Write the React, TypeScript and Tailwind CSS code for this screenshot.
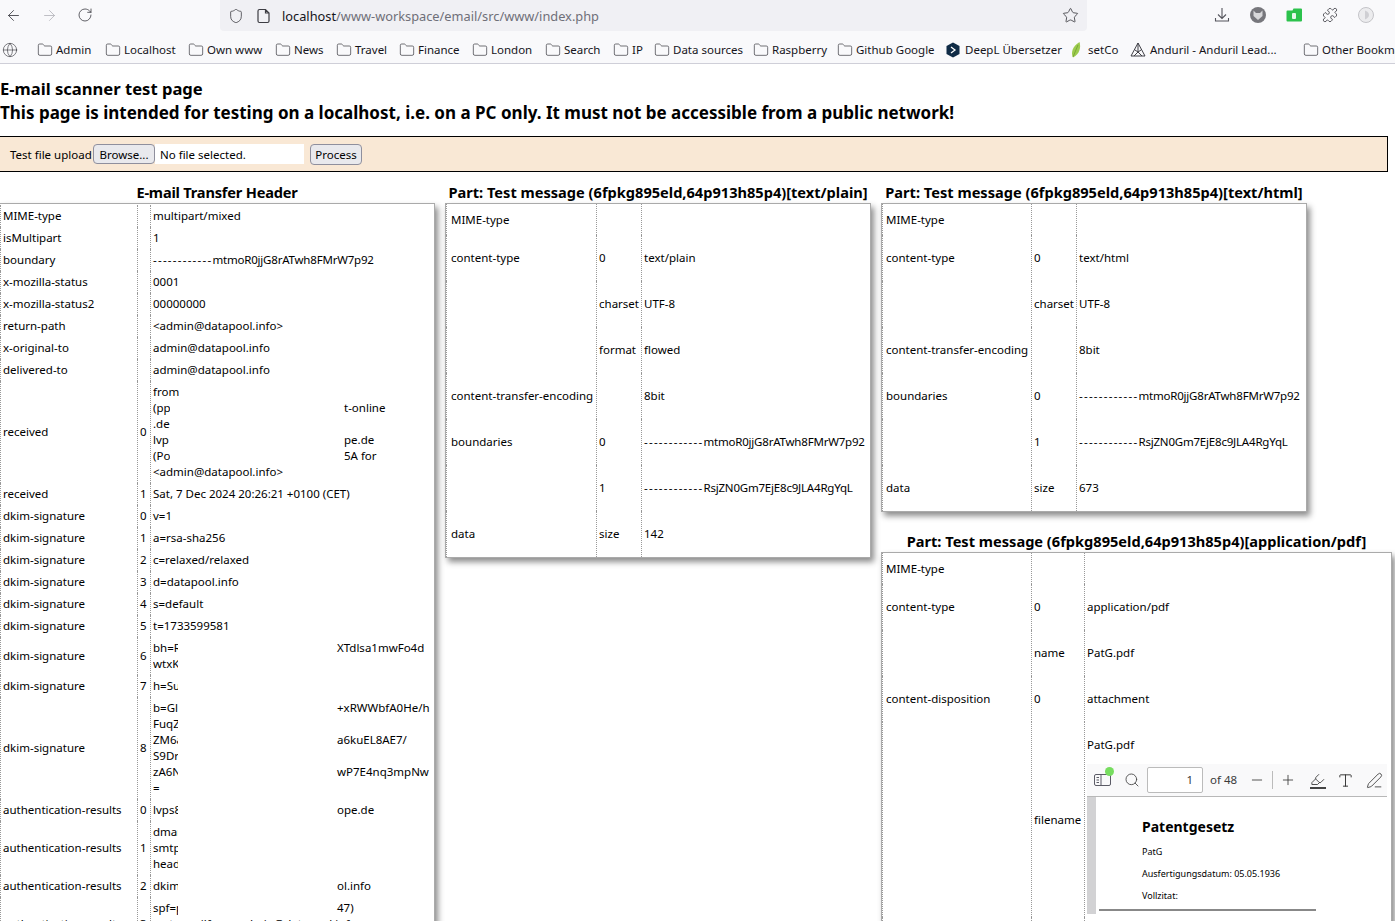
import React from "react";
import { ArrowLeft, ArrowRight, RotateCw, Shield, Star, Puzzle, Globe, Folder, Search, Minus, Plus, Type, PenLine, Highlighter } from "lucide-react";

type Row = { k?: string; i?: string; v?: React.ReactNode; h?: string };

function Frag({ l, r, clip = "w-[25px]", off = "ml-[159px]" }: { l: string; r?: string; clip?: string; off?: string }) {
  return (
    <div className="flex h-[16px] whitespace-nowrap">
      <span className={"overflow-hidden shrink-0 " + clip}>{l}</span>
      {r && <span className={off}>{r}</span>}
    </div>
  );
}

function Bound({ s }: { s: string }) {
  return (
    <>
      <span className="tracking-[1.25px]">------------</span>
      <span className="tracking-[-0.2px]">{s}</span>
    </>
  );
}

const cell = "border-r border-dotted border-[#999] align-middle";

const headerRows: Row[] = [
  { k: "MIME-type", v: "multipart/mixed" },
  { k: "isMultipart", v: "1" },
  { k: "boundary", v: <Bound s="mtmoR0jjG8rATwh8FMrW7p92" /> },
  { k: "x-mozilla-status", v: "0001" },
  { k: "x-mozilla-status2", v: "00000000" },
  { k: "return-path", v: "<admin@datapool.info>" },
  { k: "x-original-to", v: "admin@datapool.info" },
  { k: "delivered-to", v: "admin@datapool.info" },
  {
    k: "received",
    i: "0",
    v: (
      <>
        <Frag l="from" clip="w-[28px]" />
        <Frag l="(pp" clip="w-[17px]" r="t-online" off="ml-[174px]" />
        <Frag l=".de" clip="w-[17px]" />
        <Frag l="lvp" clip="w-[17px]" r="pe.de" off="ml-[174px]" />
        <Frag l="(Po" clip="w-[17px]" r="5A for" off="ml-[174px]" />
        <div className="h-[16px]">{"<admin@datapool.info>"}</div>
      </>
    ),
  },
  { k: "received", i: "1", v: "Sat, 7 Dec 2024 20:26:21 +0100 (CET)" },
  { k: "dkim-signature", i: "0", v: "v=1" },
  { k: "dkim-signature", i: "1", v: "a=rsa-sha256" },
  { k: "dkim-signature", i: "2", v: "c=relaxed/relaxed" },
  { k: "dkim-signature", i: "3", v: "d=datapool.info" },
  { k: "dkim-signature", i: "4", v: "s=default" },
  { k: "dkim-signature", i: "5", v: "t=1733599581" },
  {
    k: "dkim-signature",
    i: "6",
    v: (
      <>
        <Frag l="bh=Rk" r="XTdlsa1mwFo4d" />
        <Frag l="wtxKa" />
      </>
    ),
  },
  { k: "dkim-signature", i: "7", v: <Frag l="h=Subject" /> },
  {
    k: "dkim-signature",
    i: "8",
    v: (
      <>
        <Frag l="b=Gl0aa" r="+xRWWbfA0He/h" />
        <Frag l="FuqZaa" />
        <Frag l="ZM6aaa" r="a6kuEL8AE7/" />
        <Frag l="S9Draa" />
        <Frag l="zA6Naa" r="wP7E4nq3mpNw" />
        <div className="h-[16px]">=</div>
      </>
    ),
  },
  { k: "authentication-results", i: "0", v: <Frag l="lvps8aaa" r="ope.de" /> },
  {
    k: "authentication-results",
    i: "1",
    v: (
      <>
        <Frag l="dmarc" />
        <Frag l="smtp.a" />
        <Frag l="header" />
      </>
    ),
  },
  { k: "authentication-results", i: "2", v: <Frag l="dkim=p" r="ol.info" /> },
  {
    k: "authentication-results",
    i: "3",
    v: (
      <>
        <Frag l="spf=p" clip="w-[25px]" r="47)" />
        <div className="h-[16px] whitespace-nowrap">smtp.mailfrom=admin@datapool.info</div>
        <div className="h-[16px] whitespace-nowrap">smtp.helo=datapool.info</div>
      </>
    ),
  },
];

const plainRows: Row[] = [
  { k: "MIME-type", h: "h-[31px]" },
  { k: "content-type", i: "0", v: "text/plain", h: "h-[46px]" },
  { i: "charset", v: "UTF-8", h: "h-[46px]" },
  { i: "format", v: "flowed", h: "h-[46px]" },
  { k: "content-transfer-encoding", v: "8bit", h: "h-[46px]" },
  { k: "boundaries", i: "0", v: <Bound s="mtmoR0jjG8rATwh8FMrW7p92" />, h: "h-[46px]" },
  { i: "1", v: <Bound s="RsjZN0Gm7EjE8c9JLA4RgYqL" />, h: "h-[46px]" },
  { k: "data", i: "size", v: "142", h: "h-[46px]" },
];

const htmlRows: Row[] = [
  { k: "MIME-type", h: "h-[31px]" },
  { k: "content-type", i: "0", v: "text/html", h: "h-[46px]" },
  { i: "charset", v: "UTF-8", h: "h-[46px]" },
  { k: "content-transfer-encoding", v: "8bit", h: "h-[46px]" },
  { k: "boundaries", i: "0", v: <Bound s="mtmoR0jjG8rATwh8FMrW7p92" />, h: "h-[46px]" },
  { i: "1", v: <Bound s="RsjZN0Gm7EjE8c9JLA4RgYqL" />, h: "h-[46px]" },
  { k: "data", i: "size", v: "673", h: "h-[46px]" },
];

function PdfViewer() {
  return (
    <div className="w-[300px] h-[150px] overflow-hidden mt-[11px] bg-white flex flex-col">
      <div className="h-[33px] shrink-0 bg-[#f9f9fa] border-b border-[#b8b8b8] flex items-center text-[#3a3a3a]">
        <div className="relative w-[36px] pl-[7px] shrink-0">
          <svg width="17" height="14" viewBox="0 0 17 14" fill="none" stroke="#5b5b66" strokeWidth="1">
            <rect x="0.5" y="1.5" width="16" height="11" rx="1.5" />
            <path d="M7 1.5v11M2.5 4.5h2.5M2.5 7h2.5M2.5 9.5h2.5" />
          </svg>
          <span className="absolute left-[18px] top-[-6px] w-[9px] h-[9px] rounded-full bg-[#77dd5f]" />
        </div>
        <Search size={16} strokeWidth={1.3} className="ml-[1px] shrink-0 text-[#444]" />
        <div className="ml-[7px] w-[56px] h-[26px] shrink-0 border border-[#bbb] rounded-[2px] bg-white text-right pr-[9px] leading-[24px]">1</div>
        <span className="ml-[7px] w-[36px] shrink-0">of 48</span>
        <Minus size={16} strokeWidth={1.3} className="ml-[3px] shrink-0" />
        <span className="ml-[7px] w-px h-[18px] bg-[#bbb] shrink-0" />
        <Plus size={16} strokeWidth={1.3} className="ml-[7px] shrink-0" />
        <div className="ml-[13px] w-[17px] shrink-0 flex flex-col items-center">
          <Highlighter size={15} strokeWidth={1.4} />
          <span className="w-[16px] h-[2px] bg-[#444]" />
        </div>
        <Type size={17} strokeWidth={1.4} className="ml-[11px] shrink-0" />
        <PenLine size={17} strokeWidth={1.2} className="ml-[12px] shrink-0" />
      </div>
      <div className="flex flex-1 min-h-0">
        <div className="w-[9px] bg-[#d2d2d4] shrink-0" />
        <div className="flex-1 pl-[46px] overflow-hidden">
          <div className="font-bold text-[14px] leading-[18px] mt-[21px]">Patentgesetz</div>
          <div className="text-[9px] leading-[12px] mt-[10px]">PatG</div>
          <div className="text-[9px] leading-[12px] mt-[10px]">Ausfertigungsdatum: 05.05.1936</div>
          <div className="text-[9px] leading-[12px] mt-[10px]">Vollzitat:</div>
          <div className="-ml-[43px] w-[217px] h-[2px] bg-[#888] mt-[7px]" />
        </div>
      </div>
    </div>
  );
}

function Panel({
  title,
  rows,
  widths,
  width,
  wrapClass = "",
  keyPad = "pl-[3px]",
  tablePad = "",
  titleClass = "",
}: {
  title: string;
  rows: Row[];
  widths: [string, string];
  width: string;
  wrapClass?: string;
  keyPad?: string;
  tablePad?: string;
  titleClass?: string;
}) {
  return (
    <section className={"shrink-0 " + width + " " + wrapClass}>
      <h2 className={"h-[20px] text-center font-bold text-[14.6px] leading-[18px] whitespace-nowrap " + titleClass}>{title}</h2>
      <div className={"bg-white border border-[#aaa] shadow-[3px_4px_6px_rgba(0,0,0,0.45)] text-[11.5px] leading-[16px] " + tablePad}>
        <table className="border-separate border-spacing-0 table-fixed w-full">
          <colgroup>
            <col className={widths[0]} />
            <col className={widths[1]} />
            <col />
          </colgroup>
          <tbody>
            {rows.map((r, n) => (
              <tr key={n} className={r.h ?? ""}>
                <td className={cell + " border-l py-[3px] whitespace-nowrap " + keyPad}>{r.k}</td>
                <td className={cell + " pl-[2px] py-[3px] whitespace-nowrap"}>{r.i}</td>
                <td className="align-middle pl-[2px] py-[3px] whitespace-nowrap">{r.v}</td>
              </tr>
            ))}
          </tbody>
        </table>
      </div>
    </section>
  );
}

const bookmarks = [
  { t: "Admin", w: "w-[68px]" },
  { t: "Localhost", w: "w-[83px]" },
  { t: "Own www", w: "w-[87px]" },
  { t: "News", w: "w-[61px]" },
  { t: "Travel", w: "w-[63px]" },
  { t: "Finance", w: "w-[73px]" },
  { t: "London", w: "w-[73px]" },
  { t: "Search", w: "w-[68px]" },
  { t: "IP", w: "w-[41px]" },
  { t: "Data sources", w: "w-[99px]" },
  { t: "Raspberry", w: "w-[84px]" },
  { t: "Github Google", w: "w-[109px]" },
];

function Fold({ t, w }: { t: string; w: string }) {
  return (
    <div className={"flex items-center shrink-0 whitespace-nowrap " + w}>
      <Folder size={16} strokeWidth={1.1} className="text-[#3f3f46] shrink-0" />
      <span className="ml-[3px]">{t}</span>
    </div>
  );
}

export default function App() {
  return (
    <div className="w-[1395px] h-[921px] overflow-hidden bg-white text-black font-['Noto_Sans',sans-serif] text-[11.5px]">
      <header className="h-[64px] bg-[#f9f9fb] border-b border-[#cfcfd8] text-[#15141a]">
        <div className="h-[32px] flex items-start">
          <div className="flex items-center h-[30px] pl-[5px] w-[220px] shrink-0">
            <ArrowLeft size={17} strokeWidth={1.2} className="text-[#3c3c42]" />
            <ArrowRight size={17} strokeWidth={1.2} className="ml-[19px] text-[#b5b5bb]" />
            <RotateCw size={16} strokeWidth={1.2} className="ml-[19px] text-[#3c3c42]" />
          </div>
          <div className="w-[867px] h-[31px] bg-[#f0f0f4] rounded-b-[4px] flex items-center pl-[8px] pr-[8px] shrink-0">
            <Shield size={16} strokeWidth={1.2} className="text-[#3c3c42]" />
            <svg width="14" height="16" viewBox="0 0 14 16" fill="none" stroke="#3c3c42" strokeWidth="1.2" className="ml-[13px]">
              <path d="M2.5 1.5h6l3.5 3.5v8a1.500 1.500 0 0 1-1.500 1.500h-8A1.500 1.500 0 0 1 1 13V3a1.500 1.500 0 0 1 1.500-1.500zM8.500 1.500V5H12" />
            </svg>
            <span className="ml-[11px] mt-[2px] text-[12.8px] whitespace-nowrap text-[#15141a]">
              localhost<span className="text-[#6f6f78]">/www-workspace/email/src/www/index.php</span>
            </span>
            <Star size={17} strokeWidth={1.2} className="ml-auto text-[#3c3c42]" />
          </div>
          <div className="flex items-center h-[30px] pl-[127px] shrink-0">
            <svg width="16" height="16" viewBox="0 0 16 16" fill="none" stroke="#55555c" strokeWidth="1.1">
              <path d="M8 1v10M4 7.500 8 11.500l4-4M1.500 11v3h13v-3" />
            </svg>
            <svg width="16" height="16" viewBox="0 0 16 16" className="ml-[20px]">
              <circle cx="8" cy="8" r="8" fill="#77777c" />
              <path d="M3.500 3.500 6 6h4l2.500-2.500V9L8 13 3.500 9z" fill="#d8d8da" />
            </svg>
            <svg width="17" height="14" viewBox="0 0 17 14" className="ml-[20px]">
              <path d="M0.500 3.500a1 1 0 0 1 1-1h5l1-2h7.500a1 1 0 0 1 1 1v11a1 1 0 0 1-1 1h-13.500a1 1 0 0 1-1-1z" fill="#2cc24c" />
              <rect x="6" y="5" width="4" height="6" rx="1" fill="#e6f7ea" />
            </svg>
            <Puzzle size={16} strokeWidth={1.2} className="ml-[19px] text-[#3c3c42]" />
            <svg width="16" height="16" viewBox="0 0 16 16" className="ml-[20px]">
              <circle cx="8" cy="8" r="7.500" fill="#ececee" stroke="#c4c4c8" />
              <path d="M7 3.500c3 1 4 3 4 4.500s-1 3-4 4.500z" fill="#cfcfd3" />
            </svg>
          </div>
        </div>
        <div className="h-[31px] pt-[4px] flex items-center pl-[2px] whitespace-nowrap overflow-hidden">
          <Globe size={16} strokeWidth={1} className="text-[#3f3f46] shrink-0" />
          <div className="w-[19px] shrink-0" />
          {bookmarks.map((b) => (
            <Fold key={b.t} t={b.t} w={b.w} />
          ))}
          <div className="flex items-center shrink-0 w-[124px]">
            <svg width="14" height="16" viewBox="0 0 14 16">
              <path d="M7 0.500 13.500 4v8L7 15.500.5 12V4z" fill="#0f2b46" />
              <path d="M5 5l4 3-4 3" fill="none" stroke="#fff" strokeWidth="1.300" />
            </svg>
            <span className="ml-[5px]">DeepL Übersetzer</span>
          </div>
          <div className="flex items-center shrink-0 w-[60px]">
            <svg width="12" height="18" viewBox="0 0 12 18">
              <path d="M9.500 1C11 6 10 13 3 16.500 .5 12 2.500 5 9.500 1z" fill="#9ccb4e" />
              <path d="M8 4 3 16" stroke="#6c9a2c" strokeWidth=".7" />
            </svg>
            <span className="ml-[6px]">setCo</span>
          </div>
          <div className="flex items-center shrink-0 w-[173px]">
            <svg width="16" height="16" viewBox="0 0 16 16" fill="none" stroke="#3f3f46" strokeWidth="1">
              <path d="M8 1 1 14h14zM8 1v9M4 14l4-4 4 4M5 8l3 2 3-2" />
            </svg>
            <span className="ml-[4px]">Anduril - Anduril Lead...</span>
          </div>
          <Fold t="Other Bookmarks" w="w-[120px]" />
        </div>
      </header>

      <main className="-ml-[1px]">
        <h1 className="mt-[13px] h-[24px] pl-[1px] font-bold text-[16.6px] leading-[24px] whitespace-nowrap">E-mail scanner test page</h1>
        <h1 className="h-[24px] pl-[1px] font-bold text-[17px] leading-[24px] whitespace-nowrap">
          This page is intended for testing on a localhost, i.e. on a PC only. It must not be accessible from a public network!
        </h1>
        <form className="mt-[11px] w-[1389px] h-[36px] border border-black bg-[#f9e8d5] flex items-center pl-[10px] whitespace-nowrap">
          <span className="w-[83px] mt-[2px]">Test file upload</span>
          <span className="h-[20px] w-[62px] text-center border border-[#8f8f9d] rounded-[4px] bg-[#e9e9ed] leading-[20px]">Browse...</span>
          <span className="h-[20px] w-[149px] bg-white pl-[5px] leading-[22px]">No file selected.</span>
          <span className="ml-[6px] h-[21px] w-[52px] text-center border border-[#8f8f9d] rounded-[4px] bg-[#e9e9ed] leading-[19px]">Process</span>
        </form>
        <div className="mt-[11px] flex items-start">
          <Panel
            title="E-mail Transfer Header"
            rows={headerRows}
            widths={["w-[138px]", "w-[13px]"]}
            width="w-[436px]"
            keyPad="pl-[2px]"
            tablePad="pt-[1px]"
            titleClass="tracking-[-0.2px]"
          />
          <Panel
            title="Part: Test message (6fpkg895eld,64p913h85p4)[text/plain]"
            rows={plainRows}
            widths={["w-[151px]", "w-[45px]"]}
            width="w-[426px] ml-[10px]"
            keyPad="pl-[4px]"
          />
          <div className="shrink-0 ml-[10px] flex flex-col items-start">
            <Panel
              title="Part: Test message (6fpkg895eld,64p913h85p4)[text/html]"
              rows={htmlRows}
              widths={["w-[150px]", "w-[45px]"]}
              width="w-[426px]"
            />
            <Panel
              title="Part: Test message (6fpkg895eld,64p913h85p4)[application/pdf]"
              rows={[
                { k: "MIME-type", h: "h-[31px]" },
                { k: "content-type", i: "0", v: "application/pdf", h: "h-[46px]" },
                { i: "name", v: "PatG.pdf", h: "h-[46px]" },
                { k: "content-disposition", i: "0", v: "attachment", h: "h-[46px]" },
                {
                  i: "filename",
                  v: (
                    <div className="pt-[12px]">
                      <div className="h-[16px]">PatG.pdf</div>
                      <PdfViewer />
                    </div>
                  ),
                },
                { h: "h-[16px]" },
              ]}
              widths={["w-[150px]", "w-[53px]"]}
              width="w-[511px]"
              wrapClass="mt-[20px]"
            />
          </div>
        </div>
      </main>
    </div>
  );
}
